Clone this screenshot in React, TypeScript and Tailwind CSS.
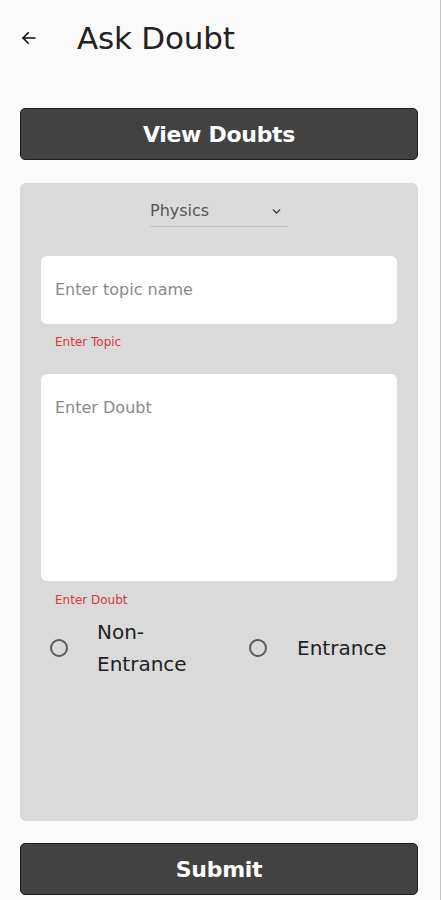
import { useState } from 'react'

const font = { fontFamily: '"DejaVu Sans", "Noto Sans", sans-serif' }

function Radio({ checked, onClick }: { checked: boolean; onClick: () => void }) {
  return (
    <button
      type="button"
      onClick={onClick}
      className="flex h-[18px] w-[18px] shrink-0 items-center justify-center rounded-full border-2 border-[#5a5a5a]"
    >
      {checked && <span className="h-2 w-2 rounded-full bg-[#5a5a5a]" />}
    </button>
  )
}

export default function App() {
  const [category, setCategory] = useState<string | null>(null)

  return (
    <div className="min-h-[900px] w-[441px] border-r border-[#c4c4c4] bg-[#fafafa]" style={font}>
      {/* top bar */}
      <header className="flex h-[76px] items-center pl-[20px]">
        <svg width="18" height="18" viewBox="0 0 24 24" fill="none" stroke="#111" strokeWidth="2.2" strokeLinecap="round" strokeLinejoin="round">
          <path d="M20 12H4" />
          <path d="M11 5l-7 7 7 7" />
        </svg>
        <h1 className="ml-[39px] text-[31px] leading-none tracking-[-0.2px] text-[#222]">Ask Doubt</h1>
      </header>

      <div className="pl-[20px] pr-[22px] pt-[32px]">
        <button
          type="button"
          className="flex h-[52px] w-full items-center justify-center rounded-[5px] border border-[#1e1e1e] bg-[#424242] text-[22px] font-bold tracking-[-0.3px] text-white"
        >
          View Doubts
        </button>

        <div className="mt-[23px] flex h-[638px] flex-col rounded-[6px] bg-[#dadada] px-[21px]">
          <div className="flex justify-center pt-[13px]">
            <div className="flex h-[31px] w-[138px] items-center justify-between border-b border-[#c2c2c2] pr-[5px]">
              <span className="text-[16px] text-[#555]">Physics</span>
              <svg width="13" height="13" viewBox="0 0 24 24" fill="none" stroke="#333" strokeWidth="2.6" strokeLinecap="round" strokeLinejoin="round">
                <path d="M6 9l6 6 6-6" />
              </svg>
            </div>
          </div>

          <div className="mt-[29px] flex h-[68px] items-center rounded-[6px] bg-white px-[14px]">
            <span className="text-[16px] text-[#8a8a8a]">Enter topic name</span>
          </div>
          <p className="mt-[12px] pl-[14px] text-[12px] leading-none text-[#d9363e]">Enter Topic</p>

          <div className="mt-[26px] h-[207px] rounded-[6px] bg-white px-[14px] pt-[22px]">
            <span className="text-[16px] text-[#8a8a8a]">Enter Doubt</span>
          </div>
          <p className="mt-[13px] pl-[14px] text-[12px] leading-none text-[#d9363e]">Enter Doubt</p>

          <div className="mt-[10px] flex items-center">
            <div className="flex w-[208px] items-center">
              <div className="pl-[9px]">
                <Radio checked={category === 'non'} onClick={() => setCategory('non')} />
              </div>
              <span className="ml-[29px] text-[20px] leading-[32px] text-[#222]">
                Non-
                <br />
                Entrance
              </span>
            </div>
            <div className="flex items-center">
              <Radio checked={category === 'ent'} onClick={() => setCategory('ent')} />
              <span className="ml-[30px] text-[20px] text-[#222]">Entrance</span>
            </div>
          </div>
        </div>

        <button
          type="button"
          className="mt-[22px] flex h-[52px] w-full items-center justify-center rounded-[5px] border border-[#1e1e1e] bg-[#424242] text-[22px] font-bold tracking-[-0.3px] text-white"
        >
          Submit
        </button>
      </div>
    </div>
  )
}
